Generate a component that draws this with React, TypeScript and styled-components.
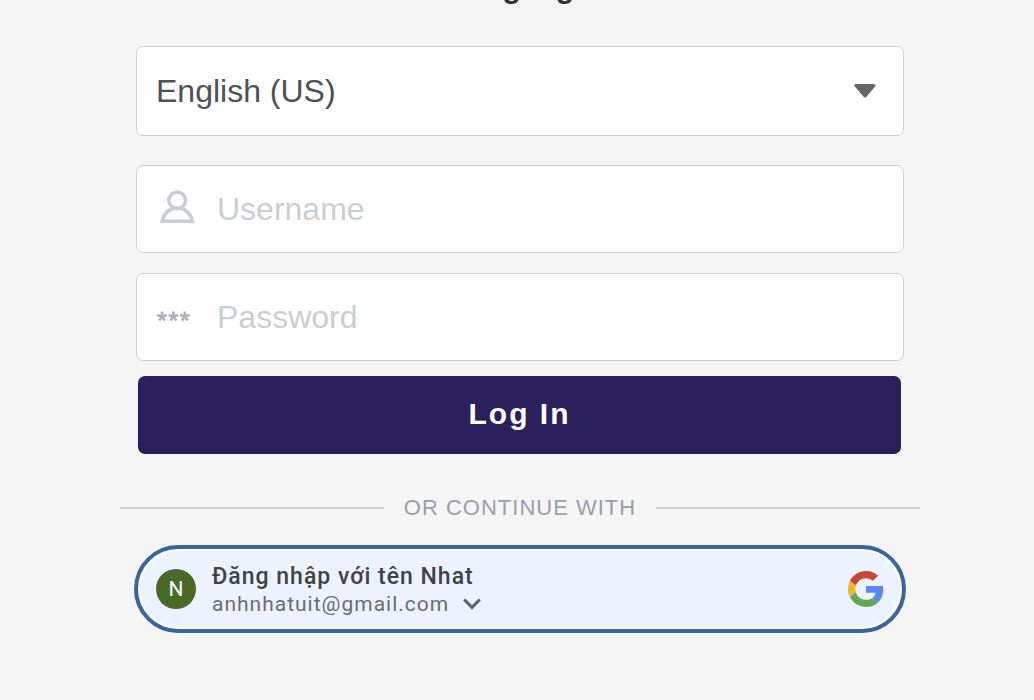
import React from "react";
import styled, { createGlobalStyle } from "styled-components";

const GlobalStyle = createGlobalStyle`
  * { box-sizing: border-box; }
  html { background: #f5f5f5; overflow: hidden; }
  body {
    margin: 0;
    background: #f5f5f5;
    font-family: "Liberation Sans", Arial, sans-serif;
  }
`;

const Page = styled.main`
  display: flex;
  justify-content: center;
  padding-left: 6px;
  margin-top: -30px;
`;

const Form = styled.form`
  width: 100%;
  max-width: 800px;
  display: flex;
  flex-direction: column;
`;

const Fields = styled.div`
  display: flex;
  flex-direction: column;
  padding: 0 16px;
`;

const LanguageLabel = styled.label`
  margin-bottom: 40px;
  color: #2f3133;
  font-size: 30px;
  line-height: 36px;
  font-weight: 700;
  text-align: center;
`;

const Box = styled.div`
  display: flex;
  align-items: center;
  height: 88px;
  margin-bottom: 20px;
  padding: 0 20px;
  background: #fff;
  border: 1px solid #cfcfd8;
  border-radius: 7px;
`;

const SelectBox = styled(Box)`
  height: 90px;
  margin-bottom: 29px;
  padding: 0 27px 0 19px;
`;

const LanguageSelect = styled.select`
  flex: 1;
  min-width: 0;
  height: 88px;
  padding: 0;
  border: 0;
  outline: 0;
  appearance: none;
  background: transparent;
  color: #4d5259;
  font-family: inherit;
  font-size: 32px;
`;

const IconSlot = styled.label`
  display: flex;
  align-items: center;
  flex: none;
  width: 60px;
  color: #c8ced6;
`;

const TextInput = styled.input`
  flex: 1;
  min-width: 0;
  height: 60px;
  padding: 0;
  border: 0;
  outline: 0;
  background: transparent;
  color: #4d5259;
  font-family: inherit;
  font-size: 32px;
  &::placeholder { color: #c8ced6; opacity: 1; }
`;

const LoginButton = styled.button`
  height: 78px;
  margin: -5px 3px 0 2px;
  padding: 0 0 2px;
  border: 0;
  border-radius: 7px;
  background: #2b1f5c;
  color: #fff;
  font-family: inherit;
  font-size: 30px;
  font-weight: 700;
  letter-spacing: 2px;
`;

const Divider = styled.div`
  display: flex;
  align-items: center;
  gap: 20px;
  margin: 40px 0 23px;
  color: #9a9eaa;
  font-size: 22px;
  line-height: 28px;
  letter-spacing: 1px;
  white-space: nowrap;
  &::before, &::after {
    content: "";
    flex: 1;
    height: 2px;
    background: #d3d3d3;
  }
`;

const GoogleButton = styled.button`
  display: flex;
  align-items: center;
  height: 88px;
  margin: 0 14px;
  padding: 0 18px;
  border: 4px solid #37669d;
  border-radius: 44px;
  background: #ecf2fe;
  box-shadow: inset 0 0 0 2px #fff;
  font-family: Roboto, sans-serif;
  text-align: left;
`;

const Avatar = styled.span`
  display: flex;
  align-items: center;
  justify-content: center;
  flex: none;
  width: 40px;
  height: 40px;
  margin-right: 16px;
  border-radius: 50%;
  background: #476b27;
  color: #fff;
  font-size: 21px;
`;

const Account = styled.span`
  flex: 1;
  display: flex;
  flex-direction: column;
  padding-top: 2px;
`;

const AccountName = styled.span`
  color: #3f4347;
  font-size: 23px;
  line-height: 28px;
  font-weight: 500;
  letter-spacing: 1px;
`;

const AccountEmail = styled.span`
  display: flex;
  align-items: center;
  gap: 14px;
  color: #696d72;
  font-size: 21px;
  line-height: 26px;
  letter-spacing: 1px;
`;

const CaretIcon = () => (
  <svg width="22" height="14" viewBox="0 0 22 14" aria-hidden="true">
    <path d="M2 1.500H20L11 12Z" fill="#666" stroke="#666" strokeWidth="3" strokeLinejoin="round" />
  </svg>
);

const UserIcon = () => (
  <svg width="40" height="40" viewBox="0 0 40 40" fill="none" stroke="currentColor" strokeWidth="3.6" aria-hidden="true">
    <circle cx="20.200" cy="11.300" r="8.300" />
    <path d="M5.200 32.200C6.500 24.500 12.500 19 20.200 19S33.900 24.500 35.200 32.200Z" />
  </svg>
);

const STAR = "M0 0V-5M0 0L4.800-1.600M0 0L2.900 4M0 0L-2.900 4M0 0L-4.800-1.600";

const StarsIcon = () => (
  <svg width="36" height="14" viewBox="0 0 36 14" fill="none" stroke="#b3b0bd" strokeWidth="2.6" aria-hidden="true">
    {[5, 16.4, 27.800].map((x) => (
      <path key={x} d={STAR} transform={`translate(${x} 6.500)`} />
    ))}
  </svg>
);

const ChevronIcon = () => (
  <svg width="18" height="12" viewBox="0 0 18 12" fill="none" stroke="#5f6368" strokeWidth="3" aria-hidden="true">
    <path d="M1.200 1.500L9 9.300L16.800 1.500" />
  </svg>
);

const GoogleIcon = () => (
  <svg width="36" height="36" viewBox="0 0 48 48" aria-hidden="true">
    <path fill="#cb4437" d="M24 9.5c3.54 0 6.71 1.22 9.21 3.6l6.85-6.85C35.9 2.38 30.47 0 24 0 14.62 0 6.51 5.38 2.56 13.22l7.98 6.19C12.43 13.72 17.74 9.5 24 9.5z" />
    <path fill="#5b87f2" d="M46.98 24.55c0-1.57-.15-3.09-.38-4.55H24v9.02h12.94c-.58 2.96-2.26 5.48-4.78 7.18l7.73 6c4.51-4.18 7.09-10.36 7.09-17.65z" />
    <path fill="#e9b92f" d="M10.53 28.59c-.48-1.45-.76-2.99-.76-4.59s.27-3.14.76-4.59l-7.98-6.19C.92 16.46 0 20.12 0 24c0 3.88.92 7.54 2.56 10.78l7.97-6.19z" />
    <path fill="#64a656" d="M24 48c6.48 0 11.93-2.13 15.89-5.81l-7.73-6c-2.15 1.45-4.92 2.3-8.16 2.3-6.26 0-11.57-4.22-13.47-9.91l-7.98 6.19C6.51 42.62 14.62 48 24 48z" />
  </svg>
);

export default function App() {
  return (
    <>
      <GlobalStyle />
      <Page>
        <Form onSubmit={(e) => e.preventDefault()}>
          <Fields>
            <LanguageLabel htmlFor="language">Language</LanguageLabel>
            <SelectBox>
              <LanguageSelect id="language">
                <option>English (US)</option>
              </LanguageSelect>
              <CaretIcon />
            </SelectBox>
            <Box>
              <IconSlot htmlFor="username"><UserIcon /></IconSlot>
              <TextInput id="username" type="text" placeholder="Username" aria-label="Username" />
            </Box>
            <Box>
              <IconSlot htmlFor="password"><StarsIcon /></IconSlot>
              <TextInput id="password" type="password" placeholder="Password" aria-label="Password" />
            </Box>
            <LoginButton type="submit">Log In</LoginButton>
          </Fields>
          <Divider>OR CONTINUE WITH</Divider>
          <GoogleButton type="button">
            <Avatar>N</Avatar>
            <Account>
              <AccountName>Đăng nhập với tên Nhat</AccountName>
              <AccountEmail>anhnhatuit@gmail.com <ChevronIcon /></AccountEmail>
            </Account>
            <GoogleIcon />
          </GoogleButton>
        </Form>
      </Page>
    </>
  );
}
